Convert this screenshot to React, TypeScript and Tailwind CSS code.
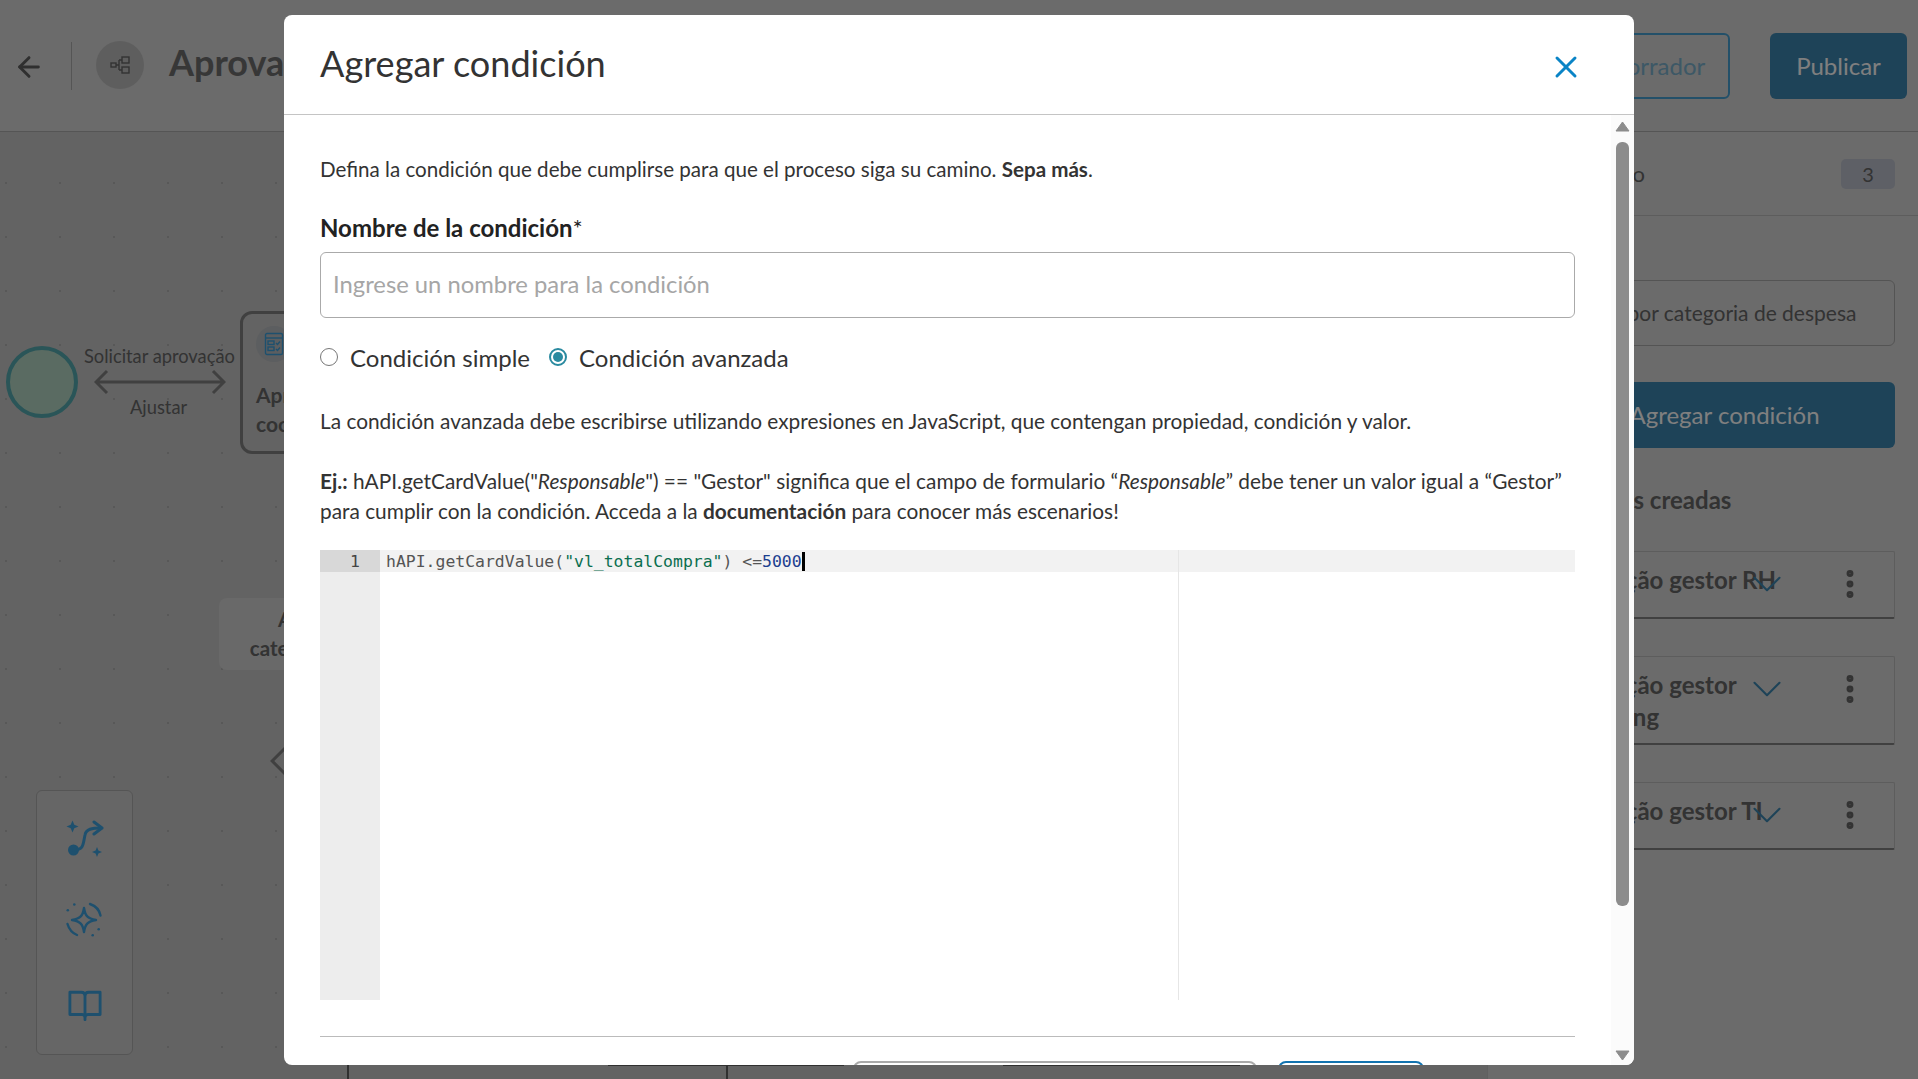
import { ArrowLeft, ChevronDown, EllipsisVertical, Plus, X } from 'lucide-react';

const CONDITIONS = [
  { title: 'Aprovação gestor RH', height: 'h-[68px]' },
  { title: 'Aprovação gestor Marketing', height: 'h-[89px]' },
  { title: 'Aprovação gestor TI', height: 'h-[68px]' },
];

function FlowIcon() {
  return (
    <svg width="24" height="24" viewBox="0 0 24 24" fill="none" stroke="#666" strokeWidth="1.4">
      <rect x="3" y="10" width="5" height="4" />
      <rect x="14" y="4" width="7" height="6" />
      <rect x="14" y="14" width="7" height="6" />
      <path d="M8 12h3M11 7v10M11 7h3M11 17h3" />
    </svg>
  );
}

function FormIcon() {
  return (
    <svg width="20" height="24" viewBox="0 0 20 24" fill="none" stroke="#3ca0dc" strokeWidth="1.4">
      <rect x="1.5" y="1.5" width="17" height="21" rx="1.5" />
      <path d="M1.5 6h17" />
      <rect x="4" y="9" width="6" height="3.5" />
      <rect x="4" y="15" width="6" height="3.5" />
      <path d="M12 11l1.5 1.5L16 9.5M12 17l1.5 1.5L16 15.5" />
    </svg>
  );
}

function PathSparkIcon() {
  return (
    <svg width="38" height="38" viewBox="0 0 38 38" fill="none">
      <path d="M6.500 0.500l1.800 4.200 4.200 1.800-4.200 1.800-1.800 4.200-1.800-4.200-4.200-1.800 4.200-1.800z" fill="#3ca0dc" />
      <path d="M31 27l1.400 3.600L36 32l-3.600 1.400L31 37l-1.400-3.600L26 32l3.600-1.400z" fill="#3ca0dc" />
      <circle cx="7.500" cy="30" r="5.500" fill="#3ca0dc" />
      <path d="M8 30c10 0 9-6 11-15 1-6 7-7 16-7" stroke="#3ca0dc" strokeWidth="3" strokeLinecap="round" />
      <path d="M28 2l8 6-8 6" stroke="#3ca0dc" strokeWidth="3" strokeLinecap="round" strokeLinejoin="round" />
    </svg>
  );
}

function OrbitSparkIcon() {
  return (
    <svg width="38" height="38" viewBox="0 0 38 38" fill="none" stroke="#3ca0dc" strokeWidth="2.400" strokeLinecap="round">
      <path d="M18 6c1.200 8 3.500 10.500 12 12-8.500 1.500-10.800 4-12 12-1.200-8-3.500-10.500-12-12 8.500-1.500 10.800-4 12-12z" strokeLinejoin="round" />
      <path d="M24 2c5.500 2 9.500 6 10.500 11.500M1.500 22c1.500 5 4.500 9 9.500 11" />
      <circle cx="8.300" cy="2.500" r="1.300" fill="#3ca0dc" stroke="none" />
      <circle cx="1.800" cy="8.300" r="1.300" fill="#3ca0dc" stroke="none" />
      <circle cx="32.700" cy="27.300" r="1.300" fill="#3ca0dc" stroke="none" />
      <circle cx="26.700" cy="33.300" r="1.300" fill="#3ca0dc" stroke="none" />
    </svg>
  );
}

function BookIcon() {
  return (
    <svg className="mt-[6px]" width="34" height="31" viewBox="0 0 36 32" fill="none" stroke="#3ca0dc" strokeWidth="3" strokeLinejoin="round">
      <path d="M2 2h12c2.500 0 4 1.500 4 4v22c0-1.500-1.500-2.500-3.500-2.500H2zM34 2H22c-2.500 0-4 1.500-4 4v22c0-1.500 1.500-2.500 3.500-2.500H34z" />
      <path d="M18 26v5" strokeLinecap="round" />
    </svg>
  );
}

function Canvas() {
  return (
    <div className="relative flex-1 bg-[#c6c6c6] bg-[radial-gradient(circle,#b0b0b0_1.200px,transparent_1.500px)] bg-[size:54px_54px] bg-[position:-21px_24px]">
      {/* nodes of the diagram sit on a free canvas */}
      <div className="absolute left-[6px] top-[214px] h-[72px] w-[72px] rounded-full border-[4px] border-[#54aab0] bg-[#b4d6c4]" />
      <span className="absolute left-[84px] top-[211px] text-[18.300px] leading-[26px] text-[#666]">Solicitar aprovação</span>
      <svg className="absolute left-[94px] top-[236px]" width="132" height="28" viewBox="0 0 132 28" fill="none" stroke="#808080" strokeWidth="3">
        <path d="M2 14h128M13 3L2 14l11 11M119 3l11 11-11 11" />
      </svg>
      <span className="absolute left-[130px] top-[262px] text-[18.300px] leading-[26px] text-[#666]">Ajustar</span>
      <div className="absolute left-[240px] top-[179px] h-[143px] w-[200px] rounded-[12px] border-[3px] border-[#808080] px-[13px] py-[12px]">
        <div className="flex h-[36px] w-[36px] items-center justify-center rounded-full bg-[#b8bcc0]">
          <FormIcon />
        </div>
        <p className="mt-[18px] text-[21px] font-bold leading-[29px] text-[#666]">Aprovação coordenador</p>
      </div>
      <div className="absolute left-[219px] top-[466px] h-[72px] w-[252px] rounded-[8px] bg-[#d2d2d2] pt-[7px] text-center text-[20.500px] font-bold leading-[29px] text-[#666]">
        <p>Aprovação por</p>
        <p>categoria de despesa</p>
      </div>
      <div className="absolute left-[275px] top-[617px] h-[24px] w-[24px] rotate-45 border-[3px] border-[#808080]" />
      <div className="absolute left-[347px] top-[931px] h-[42px] w-[381px] border-x-2 border-t-2 border-[#606060]" />
      <div className="absolute left-[608px] top-[933px] h-px w-[236px] bg-[#606060]" />
      <div className="absolute left-[1003px] top-[933px] h-px w-[237px] bg-[#606060]" />

      <div className="absolute bottom-[24px] left-[36px] flex h-[265px] w-[97px] flex-col items-center gap-[44px] rounded-[6px] border border-[#aaa] bg-[#cccccc] pt-[29px]">
        <PathSparkIcon />
        <OrbitSparkIcon />
        <BookIcon />
      </div>
    </div>
  );
}

function Sidebar() {
  return (
    <aside className="w-[431px] shrink-0 border-l border-[#c0c0c0] bg-[#d6d6d6] text-[#666]">
      <div className="flex h-[84px] items-center justify-between border-b border-[#bbb] pr-[23px]">
        <span className="w-[157px] text-right text-[22px]">Detalle del flujo</span>
        <span className="flex h-[30px] w-[54px] items-center justify-center rounded-[5px] bg-[#bcc0cc] text-[20px]">3</span>
      </div>
      <div className="pl-[28px] pr-[23px]">
        <div className="mt-[64px] flex h-[66px] items-center rounded-[6px] border border-[#a8a8a8] pl-[7px] text-[21px]">
          Aprovação por categoria de despesa
        </div>
        <button className="mt-[36px] flex h-[66px] w-full items-center justify-center gap-[12px] rounded-[6px] bg-[#3c86b0] text-[24px] text-[#fff]">
          <Plus size={26} />
          Agregar condición
        </button>
        <h3 className="ml-[-3px] mt-[35px] text-[24px] font-bold leading-[34px]">Condiciones creadas</h3>
        <div className="mt-[34px] flex flex-col gap-[37px]">
          {CONDITIONS.map(item => (
            <div
              key={item.title}
              className={`flex items-start rounded-[2px] border-x border-t border-b-2 border-[#bbb] border-b-[#808080] pl-[32px] ${item.height}`}
            >
              <p className="mt-[12px] w-[240px] shrink-0 text-[24px] font-bold leading-[32px]">{item.title}</p>
              <ChevronDown size={50} strokeWidth={1} className="ml-[-47px] mt-[7px] shrink-0 text-[#3c86b0]" />
              <EllipsisVertical size={36} strokeWidth={2.600} className="ml-[40px] mt-[14px] shrink-0 text-[#666]" />
            </div>
          ))}
        </div>
      </div>
    </aside>
  );
}

function ScrollBar() {
  return (
    <div className="flex w-[23px] shrink-0 flex-col items-center bg-[#fbfbfb] pb-[4px] pt-[6px]">
      <svg width="15" height="11" viewBox="0 0 15 11" fill="#8c8c8c" stroke="#8c8c8c" strokeWidth="1" strokeLinejoin="round">
        <path d="M7.500 1L14 10H1z" />
      </svg>
      <div className="mt-[10px] h-[764px] w-[13px] rounded-[6px] bg-[#8c8c8c]" />
      <svg className="mt-auto" width="15" height="11" viewBox="0 0 15 11" fill="#8c8c8c" stroke="#8c8c8c" strokeWidth="1" strokeLinejoin="round">
        <path d="M7.500 10L14 1H1z" />
      </svg>
    </div>
  );
}

function CodeEditor() {
  return (
    <div className="relative mt-[24px] flex h-[450px] flex-col font-['DejaVu_Sans_Mono',monospace] text-[16.450px] leading-[22px]">
      <div className="flex h-[22px]">
        <div className="w-[60px] bg-[#d8d8d8] pr-[20px] pt-px text-right text-[#444]">1</div>
        <div className="flex-1 bg-[#f2f2f2] pl-[6px] pt-px text-[#555]">
          <span className="border-r-[3px] border-black">
            hAPI.getCardValue(<span className="text-[#0b6e4f]">"vl_totalCompra"</span>) &lt;=<span className="text-[#1c3f8f]">5000</span>
          </span>
        </div>
      </div>
      <div className="w-[60px] flex-1 bg-[#ededed]" />
      <div className="absolute bottom-0 left-[858px] top-0 w-px bg-[#e6e6e6]" />
    </div>
  );
}

function ConditionModal() {
  return (
    <div className="absolute left-[284px] top-[15px] flex h-[1050px] w-[1350px] flex-col overflow-hidden rounded-[8px] bg-white text-[#333]">
      <header className="flex h-[100px] shrink-0 items-center justify-between border-b border-[#c4c4c4] pb-[3px] pl-[36px] pr-[50px]">
        <h2 className="text-[36.100px] leading-[50px]">Agregar condición</h2>
        <X size={36} strokeWidth={2} className="mt-[8px] text-[#0a84c6]" />
      </header>
      <div className="flex min-h-0 flex-1">
        <div className="min-w-0 flex-1 pl-[36px] pr-[36px] pt-[39px]">
          <p className="text-[20.600px] leading-[30px]">
            Defina la condición que debe cumplirse para que el proceso siga su camino. <strong>Sepa más</strong>.
          </p>
          <label className="mt-[29px] block text-[24px] font-bold leading-[30px] text-[#222]">
            Nombre de la condición<span className="font-normal">*</span>
          </label>
          <input
            className="mt-[9px] block h-[66px] w-full rounded-[6px] border border-[#aaa] px-[12px] pb-[3px] text-[23.800px] placeholder:text-[#a6a6a6]"
            placeholder="Ingrese un nombre para la condición"
          />
          <div className="mt-[25px] flex h-[30px] items-center text-[24px]">
            <span className="mt-[-2px] h-[18px] w-[18px] rounded-full border border-[#777]" />
            <span className="ml-[12px]">Condición simple</span>
            <span className="ml-[19px] mt-[-2px] flex h-[18px] w-[18px] items-center justify-center rounded-full border-2 border-[#2a8aa0]">
              <span className="h-[10px] w-[10px] rounded-full bg-[#2a8aa0]" />
            </span>
            <span className="ml-[12px]">Condición avanzada</span>
          </div>
          <p className="mt-[33px] text-[20.850px] leading-[30px]">
            La condición avanzada debe escribirse utilizando expresiones en JavaScript, que contengan propiedad, condición y valor.
          </p>
          <p className="mt-[30px] text-[20.850px] leading-[30px]">
            <strong>Ej.:</strong> hAPI.getCardValue("<em>Responsable</em>") == "Gestor" significa que el campo de formulario “<em>Responsable</em>” debe tener un valor igual a “Gestor” para cumplir con la condición. Acceda a la <strong>documentación</strong> para conocer más escenarios!
          </p>
          <CodeEditor />
          <div className="mt-[36px] border-t border-[#bbb]" />
          <div className="mt-[24px] flex h-[60px] justify-end gap-[21px] pr-[151px]">
            <button className="w-[404px] rounded-[8px] border-2 border-[#aaa] text-[24px]">Guardar</button>
            <button className="w-[146px] rounded-[8px] border-2 border-[#1273b0] text-[24px]">Agregar</button>
          </div>
        </div>
        <ScrollBar />
      </div>
    </div>
  );
}

export default function App() {
  return (
    <div className="relative flex h-[1079px] w-full flex-col overflow-hidden bg-[#d6d6d6] font-[Lato,sans-serif]">
      <header className="flex h-[132px] shrink-0 items-center border-b border-[#aaa] pl-[13px] pr-[11px] text-[#666]">
        <ArrowLeft size={32} strokeWidth={2.200} className="mt-[2px] text-[#5e5e5e]" />
        <div className="ml-[26px] h-[48px] w-px bg-[#aaa]" />
        <div className="ml-[24px] mt-[-2px] flex h-[48px] w-[48px] items-center justify-center rounded-full bg-[#bdbdbd]">
          <FlowIcon />
        </div>
        <h1 className="mb-[8px] ml-[25px] text-[36px] font-bold text-[#6e6e6e]">Aprovação de compras</h1>
        <button className="ml-auto h-[66px] w-[232px] rounded-[6px] border-2 border-[#46a0d2] text-[24px] text-[#7ab0cc]">Guardar borrador</button>
        <button className="ml-[40px] h-[66px] w-[137px] rounded-[6px] bg-[#3c86b0] text-[24px] text-white">Publicar</button>
      </header>
      <div className="flex min-h-0 flex-1">
        <Canvas />
        <Sidebar />
      </div>
      <div className="absolute inset-0 bg-black/50" />
      <ConditionModal />
    </div>
  );
}
